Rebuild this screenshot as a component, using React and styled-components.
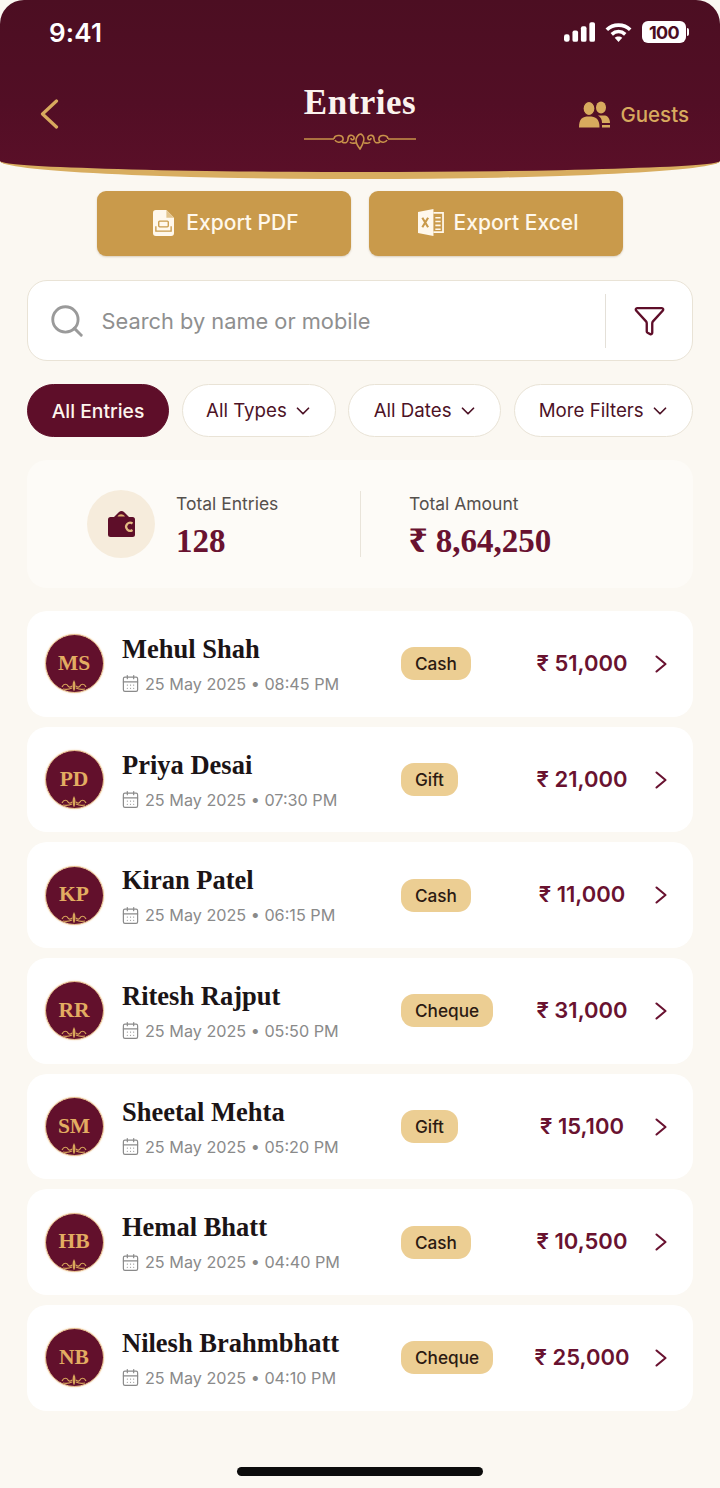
import React from "react";
import styled, { createGlobalStyle } from "styled-components";
import { CalendarDays, ChevronDown, Funnel, Search } from "lucide-react";

const SANS = `Inter, "Liberation Sans", sans-serif`;
const SERIF = `"Liberation Serif", "Noto Serif", serif`;
const MAROON = "#5e0e29";
const WINE = "#691230";
const GOLD = "#c99a4b";

const entries = [
  { initials: "MS", name: "Mehul Shah", time: "08:45 PM", type: "Cash", amount: "51,000" },
  { initials: "PD", name: "Priya Desai", time: "07:30 PM", type: "Gift", amount: "21,000" },
  { initials: "KP", name: "Kiran Patel", time: "06:15 PM", type: "Cash", amount: "11,000" },
  { initials: "RR", name: "Ritesh Rajput", time: "05:50 PM", type: "Cheque", amount: "31,000" },
  { initials: "SM", name: "Sheetal Mehta", time: "05:20 PM", type: "Gift", amount: "15,100" },
  { initials: "HB", name: "Hemal Bhatt", time: "04:40 PM", type: "Cash", amount: "10,500" },
  { initials: "NB", name: "Nilesh Brahmbhatt", time: "04:10 PM", type: "Cheque", amount: "25,000" },
];

const GlobalStyle = createGlobalStyle`
  html, body {
    margin: 0;
    background: #fbf8f2;
  }
  * {
    box-sizing: border-box;
  }
`;

const Page = styled.div`
  width: 720px;
  height: 1488px;
  overflow: hidden;
  position: relative;
  background: #fbf8f2;
  font-family: ${SANS};
`;

const Header = styled.header`
  height: 179px;
  padding: 0 31px;
  background: linear-gradient(180deg, #4c0e22 0%, #520e25 60%, #5a0f28 100%);
  border-bottom: 7px solid #d8ad60;
  border-radius: 24px 24px 50% 50% / 24px 24px 18px 18px;
  display: flex;
  flex-direction: column;
`;

const StatusBar = styled.div`
  height: 64px;
  padding: 0 1px 0 18px;
  margin-bottom: 2px;
  display: flex;
  align-items: center;
  justify-content: space-between;
  color: #fff;
`;

const Clock = styled.span`
  font-size: 26px;
  font-weight: 600;
  letter-spacing: 0.2px;
`;

const StatusIcons = styled.div`
  display: flex;
  align-items: center;
  gap: 10px;
`;

const Battery = styled.div`
  position: relative;
  width: 44px;
  height: 22px;
  margin-right: 2px;
  border-radius: 6px;
  background: #fff;
  color: #4c0e22;
  font-size: 18px;
  font-weight: 700;
  letter-spacing: -0.6px;
  display: flex;
  align-items: center;
  justify-content: center;

  &::after {
    content: "";
    position: absolute;
    right: -3px;
    top: 7px;
    width: 2px;
    height: 8px;
    border-radius: 0 2px 2px 0;
    background: #fff;
  }
`;

const NavBar = styled.div`
  display: grid;
  grid-template-columns: 1fr auto 1fr;
  align-items: start;
`;

const BackButton = styled.div`
  padding: 33px 0 0 9px;
  display: flex;
`;

const TitleBlock = styled.div`
  display: flex;
  flex-direction: column;
  align-items: center;
  gap: 9px;
  margin-top: 17px;
`;

const Title = styled.h1`
  margin: 0;
  color: #fbf3ee;
  font-family: ${SERIF};
  font-size: 35px;
  line-height: 40px;
  font-weight: 700;
  letter-spacing: 0.5px;
`;

const GuestsLink = styled.div`
  justify-self: end;
  margin-top: 35px;
  display: flex;
  align-items: center;
  gap: 10px;
  color: #d8aa5e;
  font-size: 20.5px;
  font-weight: 500;
`;

const Content = styled.main`
  padding: 12px 27px 0;
  display: flex;
  flex-direction: column;
`;

const ExportRow = styled.div`
  display: flex;
  justify-content: center;
  gap: 18px;
`;

const ExportButton = styled.div`
  width: 254px;
  height: 65px;
  padding: 0 0 2px 4px;
  border-radius: 9px;
  background: ${GOLD};
  color: #fff8ec;
  font-size: 21px;
  font-weight: 500;
  display: flex;
  align-items: center;
  justify-content: center;
  gap: ${(p) => p.$gap}px;
  box-shadow: 0 1px 2px rgba(120, 85, 30, 0.25);
`;

const SearchBox = styled.div`
  margin-top: 24px;
  height: 81px;
  border: 1.5px solid #e9e3d6;
  border-radius: 20px;
  background: #fff;
  padding-left: 20px;
  display: flex;
  align-items: center;
  color: #9a9a9a;
`;

const Placeholder = styled.span`
  flex: 1;
  margin-left: 15.5px;
  color: #8f8f8f;
  font-size: 21.8px;
`;

const FilterButton = styled.div`
  width: 87px;
  height: 54px;
  border-left: 1.5px solid #e4e0d8;
  color: ${MAROON};
  display: flex;
  align-items: center;
  justify-content: center;
`;

const Filters = styled.div`
  margin-top: 23px;
  display: flex;
  justify-content: space-between;
`;

const Pill = styled.div`
  height: 53px;
  width: ${(p) => p.$width}px;
  border-radius: 27px;
  border: 1.5px solid ${(p) => (p.$active ? MAROON : "#e9e3d6")};
  background: ${(p) => (p.$active ? MAROON : "#fff")};
  color: ${(p) => (p.$active ? "#fdf5ee" : "#4d1226")};
  font-size: ${(p) => (p.$active ? 19.3 : 18.7)}px;
  font-weight: ${(p) => (p.$active ? 500 : 400)};
  display: flex;
  align-items: center;
  justify-content: center;
  gap: 5.5px;

  svg {
    margin-right: -3px;
  }
`;

const StatsCard = styled.section`
  margin-top: 23px;
  height: 128px;
  border-radius: 20px;
  background: #fdfbf7;
  display: grid;
  grid-template-columns: 333px 1fr;
  align-items: center;
`;

const StatGroup = styled.div`
  height: 66px;
  display: flex;
  align-items: center;
  padding-left: ${(p) => p.$indent}px;
  border-left: ${(p) => (p.$divided ? "1.5px solid #e9e4da" : "none")};
`;

const WalletBadge = styled.div`
  width: 68px;
  height: 68px;
  margin-right: 21px;
  border-radius: 50%;
  background: #f6ecdc;
  display: flex;
  align-items: center;
  justify-content: center;
`;

const StatText = styled.div`
  padding-top: 4px;
`;

const StatLabel = styled.div`
  color: #55504c;
  font-size: 17.5px;
  line-height: 22px;
`;

const StatValue = styled.div`
  margin-top: 8px;
  color: ${WINE};
  font-family: ${SERIF};
  font-size: 33px;
  line-height: 36px;
  font-weight: 700;
`;

const List = styled.section`
  margin-top: 23px;
  display: flex;
  flex-direction: column;
  gap: 10px;
`;

const Row = styled.article`
  height: 105.7px;
  border-radius: 20px;
  background: #fff;
  padding-left: 17.5px;
  display: flex;
  align-items: center;
`;

const Avatar = styled.div`
  position: relative;
  flex: none;
  width: 59px;
  height: 59px;
  padding-bottom: 1px;
  border-radius: 50%;
  background: #62102c;
  border: 1.5px solid #ecc796;
  box-shadow: 0 0 2px #f2d8b4;
  color: #e2ad62;
  font-family: ${SERIF};
  font-size: 21.5px;
  font-weight: 700;
  display: flex;
  align-items: center;
  justify-content: center;
`;

const AvatarFlourish = styled.svg`
  position: absolute;
  left: 50%;
  bottom: 0;
  transform: translateX(-50%);
`;

const Person = styled.div`
  width: 279px;
  margin-left: 18.5px;
`;

const Name = styled.div`
  color: #1b1416;
  font-family: ${SERIF};
  font-size: 26.5px;
  line-height: 32px;
  font-weight: 700;
  white-space: nowrap;
`;

const When = styled.div`
  margin-top: 8px;
  display: flex;
  align-items: center;
  gap: 5.5px;
  color: #8a8a8a;
  font-size: 16.2px;
  line-height: 22px;
  white-space: nowrap;

  svg {
    margin-left: -1.5px;
  }
`;

const TypeCell = styled.div`
  width: 121px;
`;

const TypeTag = styled.span`
  display: inline-flex;
  align-items: center;
  height: 33px;
  padding: 0 14px;
  border-radius: 13px;
  background: #ecce93;
  color: #2b1a12;
  font-size: 17.2px;
  font-weight: 500;
`;

const Amount = styled.div`
  width: 120px;
  padding-bottom: 2px;
  text-align: center;
  color: ${WINE};
  font-size: 22px;
  font-weight: 600;
  white-space: nowrap;
`;

const RowChevron = styled.svg`
  margin-left: 13px;
`;

const HomeIndicator = styled.div`
  position: absolute;
  left: 237px;
  bottom: 12px;
  width: 246px;
  height: 9px;
  border-radius: 5px;
  background: #0c0c0c;
`;

const SignalIcon = () => (
  <svg width="31" height="20" viewBox="0 0 33 21" fill="#fff">
    <rect x="0" y="13" width="6" height="8" rx="2.5" />
    <rect x="9" y="9" width="6" height="12" rx="2" />
    <rect x="18" y="4.5" width="6" height="16.5" rx="2" />
    <rect x="27" y="0" width="6" height="21" rx="2" />
  </svg>
);

const WifiIcon = () => (
  <svg width="27" height="21" viewBox="0 0 30 22" fill="none" stroke="#fff" strokeWidth="4">
    <path d="M2 8 C9 1 21 1 28 8" />
    <path d="M7.5 13 C12 9 18 9 22.5 13" />
    <path d="M15 21.5 L10.8 16.8 C13 15 17 15 19.2 16.8 Z" fill="#fff" stroke="none" />
  </svg>
);

const BackIcon = () => (
  <svg width="19" height="30" viewBox="0 0 19 30" fill="none" stroke="#d8aa5e" strokeWidth="3.2" strokeLinecap="round" strokeLinejoin="round">
    <path d="M16.5 2 L2.5 15 L16.5 28" />
  </svg>
);

const Ornament = () => (
  <svg width="112" height="18" viewBox="0 0 112 18" fill="none" stroke="#c8924a" strokeWidth="1.6">
    <path d="M0 7 H30 M84 7 H112" strokeWidth="1.3" />
    <path d="M30 7 C30 3 38 2 39 6 C40 10 33 12 31 8" />
    <path d="M38 10 C42 12 44 10 44 7 C44 3 48 2 50 5 C51 8 47 9 47 6" />
    <path d="M56 17 C52 12 51 8 53 5 C54 3 56 2 57 2 C59 3 61 6 59 11 C58 14 57 15 56 17 Z" />
    <path d="M52 11 C49 11 47 12 46 10 M60 11 C63 11 65 12 66 10" />
    <path d="M76 10 C72 12 70 10 70 7 C70 3 66 2 64 5 C63 8 67 9 67 6" />
    <path d="M84 7 C84 3 76 2 75 6 C74 10 81 12 83 8" />
  </svg>
);

const GuestsIcon = () => (
  <svg width="31" height="27" viewBox="0 0 31 27" fill="#d8aa5e">
    <ellipse cx="22" cy="6.5" rx="5" ry="6" />
    <path d="M19 14.5 H26 C29 15 31 18 31 22 H23 C23 19 22 16 19 14.5 Z" />
    <path d="M23 24 H31 V26.5 H23 Z" />
    <ellipse cx="10" cy="7.5" rx="6" ry="7" stroke="#530e25" strokeWidth="1.2" />
    <path d="M0 26.5 C0 18 3 15.5 10 15.5 C17 15.5 20.5 18 20.5 26.5 Z" />
  </svg>
);

const PdfIcon = () => (
  <svg width="21" height="26" viewBox="0 0 22 27">
    <path d="M3 0 H14 L22 8 V24 A3 3 0 0 1 19 27 H3 A3 3 0 0 1 0 24 V3 A3 3 0 0 1 3 0 Z" fill="#fff8ec" />
    <path d="M14 0 V8 H22 Z" fill="#e3c48c" />
    <rect x="6" y="11.5" width="10" height="6" rx="1" fill="none" stroke={GOLD} strokeWidth="1.4" />
    <path d="M3 17 V22 H19 V17" fill="none" stroke={GOLD} strokeWidth="1.4" />
  </svg>
);

const ExcelIcon = () => (
  <svg width="26" height="27" viewBox="0 0 27 28">
    <path d="M0 3 L16 0 V28 L0 25 Z" fill="#fff8ec" />
    <path d="M4.5 9 L10.5 19 M10.5 9 L4.5 19" stroke={GOLD} strokeWidth="2.2" />
    <path d="M16 4 H26 V24 H16" fill="none" stroke="#fff8ec" strokeWidth="1.8" />
    <path d="M18 9 H23.5 M18 13 H23.5 M18 17 H23.5 M18 21 H23.5" stroke="#fff8ec" strokeWidth="1.6" />
  </svg>
);

const WalletIcon = () => (
  <svg width="27" height="26" viewBox="0 0 27 26">
    <path d="M5 7 L11 1 C12.5 -0.3 14.5 -0.3 16 1 L22 7 Z" fill={MAROON} />
    <path d="M9.5 5.5 C11 2.5 15 2.5 17 5.5 Z" fill="#e0b070" />
    <rect x="0" y="6" width="27" height="20" rx="2.5" fill={MAROON} />
    <path d="M24.5 12.5 A4 4 0 1 0 24.5 19" fill="none" stroke="#e3bb82" strokeWidth="2.2" />
  </svg>
);

const Flourish = () => (
  <AvatarFlourish width="26" height="13" viewBox="0 0 26 13" fill="none" stroke="#d9a75c" strokeWidth="1.2">
    <path d="M1 8 C3 4 6 5 7 7 C8 9 10 8 11 7 M25 8 C23 4 20 5 19 7 C18 9 16 8 15 7" />
    <path d="M2 10 C6 11 9 10 11 9 M24 10 C20 11 17 10 15 9" />
    <path d="M13 12.5 C11 9 11 4 13 1 C15 4 15 9 13 12.5 Z" fill="#d9a75c" stroke="none" />
  </AvatarFlourish>
);

const EntryRow = ({ entry }) => (
  <Row>
    <Avatar>
      {entry.initials}
      <Flourish />
    </Avatar>
    <Person>
      <Name>{entry.name}</Name>
      <When>
        <CalendarDays size={19} strokeWidth={1.5} />
        25 May 2025 • {entry.time}
      </When>
    </Person>
    <TypeCell>
      <TypeTag>{entry.type}</TypeTag>
    </TypeCell>
    <Amount>₹ {entry.amount}</Amount>
    <RowChevron width="12" height="18" viewBox="0 0 12 18" fill="none" stroke={WINE} strokeWidth="2.1" strokeLinecap="round" strokeLinejoin="round">
      <path d="M1.5 1.5 L10.5 9 L1.5 16.5" />
    </RowChevron>
  </Row>
);

const App = () => {
  return (
    <Page>
      <GlobalStyle />
      <Header>
        <StatusBar>
          <Clock>9:41</Clock>
          <StatusIcons>
            <SignalIcon />
            <WifiIcon />
            <Battery>100</Battery>
          </StatusIcons>
        </StatusBar>
        <NavBar>
          <BackButton>
            <BackIcon />
          </BackButton>
          <TitleBlock>
            <Title>Entries</Title>
            <Ornament />
          </TitleBlock>
          <GuestsLink>
            <GuestsIcon />
            Guests
          </GuestsLink>
        </NavBar>
      </Header>
      <Content>
        <ExportRow>
          <ExportButton $gap={12}>
            <PdfIcon />
            Export PDF
          </ExportButton>
          <ExportButton $gap={10}>
            <ExcelIcon />
            Export Excel
          </ExportButton>
        </ExportRow>
        <SearchBox>
          <Search size={38} strokeWidth={1.8} />
          <Placeholder>Search by name or mobile</Placeholder>
          <FilterButton>
            <Funnel size={33} strokeWidth={1.7} />
          </FilterButton>
        </SearchBox>
        <Filters>
          <Pill $active $width={142}>All Entries</Pill>
          <Pill $width={154}>All Types<ChevronDown size={22} strokeWidth={1.9} /></Pill>
          <Pill $width={153}>All Dates<ChevronDown size={22} strokeWidth={1.9} /></Pill>
          <Pill $width={179}>More Filters<ChevronDown size={22} strokeWidth={1.9} /></Pill>
        </Filters>
        <StatsCard>
          <StatGroup $indent={60}>
            <WalletBadge>
              <WalletIcon />
            </WalletBadge>
            <StatText>
              <StatLabel>Total Entries</StatLabel>
              <StatValue>128</StatValue>
            </StatText>
          </StatGroup>
          <StatGroup $divided $indent={48}>
            <StatText>
              <StatLabel>Total Amount</StatLabel>
              <StatValue>₹ 8,64,250</StatValue>
            </StatText>
          </StatGroup>
        </StatsCard>
        <List>
          {entries.map((entry) => (
            <EntryRow key={entry.initials} entry={entry} />
          ))}
        </List>
      </Content>
      <HomeIndicator />
    </Page>
  );
};

export default App;
